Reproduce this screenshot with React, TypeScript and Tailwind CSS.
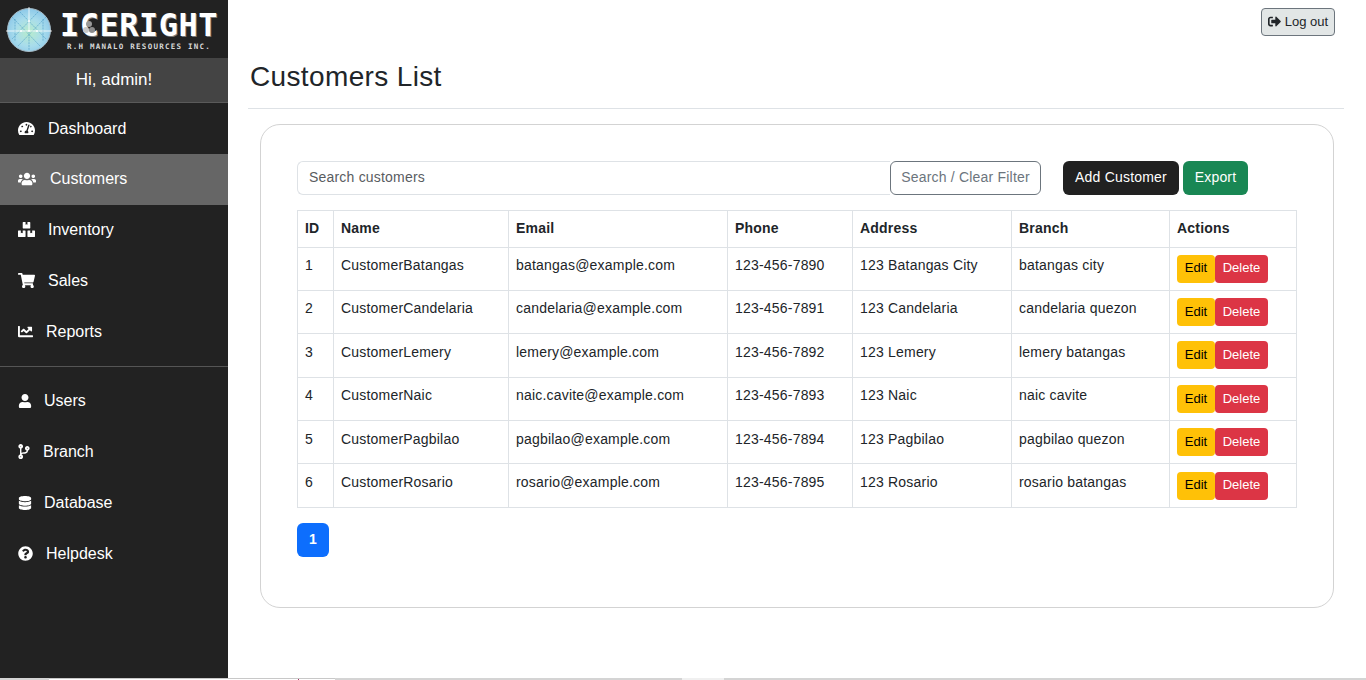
import {
  FaBoxes,
  FaChartLine,
  FaCodeBranch,
  FaDatabase,
  FaQuestionCircle,
  FaShoppingCart,
  FaSignOutAlt,
  FaTachometerAlt,
  FaUser,
  FaUsers,
} from "react-icons/fa"
import type { IconType } from "react-icons"

type NavItem = { label: string; icon: IconType; iconSize: string; gap: string; active?: boolean; lift?: boolean }

const mainNav: NavItem[] = [
  { label: "Dashboard", icon: FaTachometerAlt, iconSize: "w-[17px] h-[17px]", gap: "w-[30px]" },
  { label: "Customers", icon: FaUsers, iconSize: "w-[18px] h-[18px]", gap: "w-[32px]", active: true, lift: true },
  { label: "Inventory", icon: FaBoxes, iconSize: "w-[17px] h-[17px]", gap: "w-[30px]", lift: true },
  { label: "Sales", icon: FaShoppingCart, iconSize: "w-[17px] h-[17px]", gap: "w-[30px]", lift: true },
  { label: "Reports", icon: FaChartLine, iconSize: "w-[15px] h-[15px]", gap: "w-[28px]", lift: true },
]

const adminNav: NavItem[] = [
  { label: "Users", icon: FaUser, iconSize: "w-[14px] h-[14px]", gap: "w-[26px]" },
  { label: "Branch", icon: FaCodeBranch, iconSize: "w-[12px] h-[15px]", gap: "w-[25px]" },
  { label: "Database", icon: FaDatabase, iconSize: "w-[14px] h-[14px]", gap: "w-[26px]" },
  { label: "Helpdesk", icon: FaQuestionCircle, iconSize: "w-[15px] h-[15px]", gap: "w-[28px]" },
]

const customers = [
  ["1", "CustomerBatangas", "batangas@example.com", "123-456-7890", "123 Batangas City", "batangas city"],
  ["2", "CustomerCandelaria", "candelaria@example.com", "123-456-7891", "123 Candelaria", "candelaria quezon"],
  ["3", "CustomerLemery", "lemery@example.com", "123-456-7892", "123 Lemery", "lemery batangas"],
  ["4", "CustomerNaic", "naic.cavite@example.com", "123-456-7893", "123 Naic", "naic cavite"],
  ["5", "CustomerPagbilao", "pagbilao@example.com", "123-456-7894", "123 Pagbilao", "pagbilao quezon"],
  ["6", "CustomerRosario", "rosario@example.com", "123-456-7895", "123 Rosario", "rosario batangas"],
]

const headers = ["ID", "Name", "Email", "Phone", "Address", "Branch", "Actions"]

function Globe() {
  return (
    <svg viewBox="0 0 46 46" className="w-[46px] h-[46px] shrink-0">
      <defs>
        <radialGradient id="globe" cx="50%" cy="55%" r="60%">
          <stop offset="0%" stopColor="#b8eccb" />
          <stop offset="55%" stopColor="#a8dcec" />
          <stop offset="100%" stopColor="#86c4e8" />
        </radialGradient>
      </defs>
      <circle cx="23" cy="23" r="21.5" fill="url(#globe)" stroke="#a7bcc8" strokeWidth="1" />
      <path
        d="M6 10 L34 39 M14 5 L40 32 M40 10 L12 39 M32 5 L6 32 M9 12 L9 34 M37 12 L37 34 M23 24 L23 43"
        stroke="#4f9fc6"
        strokeWidth="0.8"
        strokeDasharray="2 0.8"
        fill="none"
        opacity="0.8"
      />
      <path d="M0 24 L46 24 M23 0 L23 24" stroke="#ffffff" strokeWidth="0.9" opacity="0.9" />
      <circle cx="15" cy="24" r="1" fill="#fff" />
      <circle cx="31" cy="24" r="1" fill="#fff" />
      <circle cx="23" cy="14" r="1" fill="#fff" />
      <circle cx="23" cy="24" r="1" fill="#fff" />
    </svg>
  )
}

function Logo() {
  return (
    <div className="h-[58px] bg-[#222222] flex items-center pl-[6px] pt-[1px]">
      <Globe />
      <div className="ml-[8px] flex flex-col items-center leading-none">
        <div className="relative font-['DejaVu_Sans_Mono'] font-bold text-[32px] h-[28px] leading-[28px] tracking-[0.5px] text-white [text-shadow:1px_1px_0_#777777] w-[158px] flex justify-center whitespace-nowrap mt-[2px]">
          ICERIGHT
          <svg viewBox="0 0 14 14" className="absolute left-[22px] top-[9px] w-[14px] h-[14px]">
            <circle cx="7" cy="4" r="3" fill="#9a9a9a" />
            <circle cx="4" cy="10" r="3" fill="#c8c8c8" />
            <circle cx="10" cy="10" r="3" fill="#8c8c8c" />
          </svg>
        </div>
        <div className="font-['DejaVu_Sans_Mono'] font-bold text-[7.5px] tracking-[1.25px] text-[#d8d8d8] mt-[4px] whitespace-nowrap">
          R.H MANALO RESOURCES INC.
        </div>
      </div>
    </div>
  )
}

function NavLink({ item }: { item: NavItem }) {
  const Icon = item.icon
  return (
    <a
      href="#"
      className={`h-[51px] flex items-center pl-[18px] text-[16px] text-white ${item.active ? "bg-[#666666]" : ""} ${item.lift ? "pb-[2px]" : ""}`}
    >
      <span className={`${item.gap} shrink-0`}>
        <Icon className={item.iconSize} />
      </span>
      {item.label}
    </a>
  )
}

function Sidebar() {
  return (
    <aside className="w-[228px] shrink-0 bg-[#222222] flex flex-col">
      <Logo />
      <div className="h-[45px] bg-[#444444] border-b border-[#5a5a5a] flex items-center justify-center text-[17px] text-white">
        Hi, admin!
      </div>
      <nav>
        {mainNav.map((item) => (
          <NavLink key={item.label} item={item} />
        ))}
      </nav>
      <div className="h-px bg-[#555555] mt-[8px] mb-[8px]" />
      <nav>
        {adminNav.map((item) => (
          <NavLink key={item.label} item={item} />
        ))}
      </nav>
    </aside>
  )
}

function CustomerTable() {
  return (
    <table className="w-[999px] table-fixed border-collapse text-[14px] tracking-[0.2px] text-[#212529]">
      <colgroup>
        <col className="w-[36px]" />
        <col className="w-[175px]" />
        <col className="w-[219px]" />
        <col className="w-[125px]" />
        <col className="w-[159px]" />
        <col className="w-[158px]" />
        <col className="w-[127px]" />
      </colgroup>
      <thead>
        <tr className="h-[36.5px]">
          {headers.map((h) => (
            <th key={h} className="border border-[#dee2e6] px-[7px] text-left font-bold">
              {h}
            </th>
          ))}
        </tr>
      </thead>
      <tbody>
        {customers.map((row) => (
          <tr key={row[0]} className="h-[43.4px]">
            {row.map((cell, i) => (
              <td key={i} className="border border-[#dee2e6] px-[7px] pt-[7.5px] pb-0 align-top whitespace-nowrap">
                {cell}
              </td>
            ))}
            <td className="border border-[#dee2e6] px-[7px] align-middle">
              <div className="flex text-[13px] tracking-normal">
                <button className="w-[38px] h-[28px] bg-[#ffc107] text-black rounded-[4px] pb-[1px]">Edit</button>
                <button className="w-[53px] h-[28px] bg-[#dc3545] text-white rounded-[4px] pb-[1px]">Delete</button>
              </div>
            </td>
          </tr>
        ))}
      </tbody>
    </table>
  )
}

function CustomersCard() {
  return (
    <section className="ml-[12px] w-[1074px] h-[484px] border border-[#d3d3d3] rounded-[20px] pt-[36px] pl-[36px]">
      <div className="flex items-stretch h-[34px] text-[14px] tracking-[0.2px]">
        <input
          placeholder="Search customers"
          className="w-[593px] border border-[#dee2e6] border-r-0 rounded-l-[6px] px-[11px] pb-[1px] outline-none placeholder:text-[#595c5f]"
        />
        <button className="w-[151px] border border-[#6c757d] rounded-[6px] text-[#6c757d] pb-[1px]">Search / Clear Filter</button>
        <button className="ml-[22px] w-[116px] bg-[#212121] text-white rounded-[6px] pb-[1px]">Add Customer</button>
        <button className="ml-[4px] w-[65px] bg-[#198754] text-white rounded-[6px] pb-[1px]">Export</button>
      </div>
      <div className="mt-[15px]">
        <CustomerTable />
      </div>
      <button className="mt-[15px] w-[32px] h-[34px] bg-[#0d6efd] text-white rounded-[6px] text-[14px] font-bold">1</button>
    </section>
  )
}

export default function App() {
  return (
    <div className="w-[1366px] h-[680px] overflow-hidden flex flex-col bg-white font-['Liberation_Sans',Arial,sans-serif]">
      <div className="flex-1 min-h-0 flex">
        <Sidebar />
        <main className="flex-1 min-w-0 pl-[20px] pr-[22px]">
          <div className="h-[36px] pt-[8px] flex justify-end pr-[9px]">
            <button className="w-[74px] h-[28px] flex items-center justify-center gap-[4px] bg-[#e2e6e6] border border-[#6c757d] rounded-[4px] text-[13px] text-[#212529] pb-[1px]">
              <FaSignOutAlt className="w-[13px] h-[13px]" />
              Log out
            </button>
          </div>
          <div className="h-[73px] border-b border-[#dee2e6] flex items-start">
            <h1 className="mt-[24px] ml-[2px] text-[28px] tracking-[0.36px] leading-[34px] text-[#212529]">Customers List</h1>
          </div>
          <div className="pt-[15px]">
            <CustomersCard />
          </div>
        </main>
      </div>
      <div className="h-[2px] flex bg-[#d4d4d4]">
        <div className="w-[49px]" />
        <div className="relative w-[286px] bg-white border-t border-[#c8c8c8]">
          <div className="absolute left-[249px] top-0 w-px h-[2px] bg-[#a03060]" />
        </div>
        <div className="w-[347px]" />
        <div className="w-[42px] bg-[#f0f0f0]" />
      </div>
    </div>
  )
}
